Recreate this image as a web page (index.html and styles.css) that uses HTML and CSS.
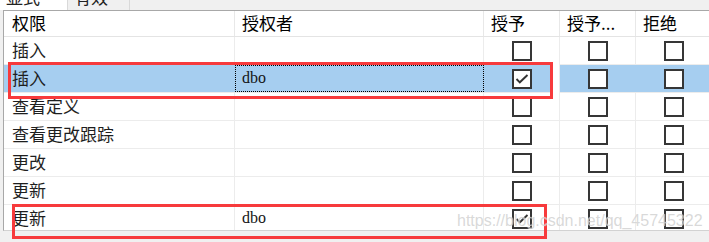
FILE: index.html
```html
<!DOCTYPE html>
<html lang="zh-CN">
<head>
<meta charset="utf-8">
<title>权限</title>
<link rel="stylesheet" href="styles.css">
</head>
<body>
<div class="tabs">
  <div class="tab tab-active"><span class="tab-label">显式</span></div>
  <div class="tab tab-other"><span class="tab-label">有效</span></div>
  <div class="tab-fill"></div>
</div>
<div class="grid">
  <div class="row head">
    <div class="cell c1">权限</div>
    <div class="cell c2">授权者</div>
    <div class="cell c3">授予</div>
    <div class="cell c4">授予...</div>
    <div class="cell c5">拒绝</div>
  </div>
  <div class="row">
    <div class="cell c1">插入</div>
    <div class="cell c2"></div>
    <div class="cell cb"><span class="box"></span></div>
    <div class="cell cb"><span class="box"></span></div>
    <div class="cell cb"><span class="box"></span></div>
  </div>
  <div class="row selected">
    <div class="cell c1">插入</div>
    <div class="cell c2 focus"><span class="latin">dbo</span></div>
    <div class="cell cb"><span class="box"><svg class="tick" viewBox="0 0 20 20"><polyline points="4.5,10 7.8,13.3 15.5,6"/></svg></span></div>
    <div class="cell cb"><span class="box"></span></div>
    <div class="cell cb"><span class="box"></span></div>
  </div>
  <div class="row">
    <div class="cell c1">查看定义</div>
    <div class="cell c2"></div>
    <div class="cell cb"><span class="box"></span></div>
    <div class="cell cb"><span class="box"></span></div>
    <div class="cell cb"><span class="box"></span></div>
  </div>
  <div class="row">
    <div class="cell c1">查看更改跟踪</div>
    <div class="cell c2"></div>
    <div class="cell cb"><span class="box"></span></div>
    <div class="cell cb"><span class="box"></span></div>
    <div class="cell cb"><span class="box"></span></div>
  </div>
  <div class="row">
    <div class="cell c1">更改</div>
    <div class="cell c2"></div>
    <div class="cell cb"><span class="box"></span></div>
    <div class="cell cb"><span class="box"></span></div>
    <div class="cell cb"><span class="box"></span></div>
  </div>
  <div class="row">
    <div class="cell c1">更新</div>
    <div class="cell c2"></div>
    <div class="cell cb"><span class="box"></span></div>
    <div class="cell cb"><span class="box"></span></div>
    <div class="cell cb"><span class="box"></span></div>
  </div>
  <div class="row">
    <div class="cell c1">更新</div>
    <div class="cell c2"><span class="latin">dbo</span></div>
    <div class="cell cb"><span class="box"><svg class="tick" viewBox="0 0 20 20"><polyline points="4.5,10 7.8,13.3 15.5,6"/></svg></span></div>
    <div class="cell cb"><span class="box"></span></div>
    <div class="cell cb"><span class="box"></span></div>
  </div>
</div>
<div class="mark mark-1"></div>
<div class="mark mark-2"></div>
<div class="watermark">https://blog.csdn.net/qq_45745322</div>
</body>
</html>
```
FILE: styles.css
```css
html, body {
  margin: 0;
  padding: 0;
}
body {
  width: 709px;
  height: 242px;
  overflow: hidden;
  position: relative;
  background: #f0f0f0;
  font-family: "Noto Sans CJK SC", "Noto Sans", sans-serif;
  color: #1e1e1e;
}
.tabs {
  display: flex;
  height: 10px;
}
.tab {
  height: 10px;
  overflow: hidden;
  box-sizing: border-box;
  font-size: 17px;
  color: #222;
}
.tab-label {
  display: block;
  line-height: 17px;
  margin-top: -12px;
}
.tab-active {
  width: 67px;
  background: #fff;
  padding-left: 6px;
}
.tab-other {
  width: 63px;
  background: #f0f0f0;
  border-left: 1px solid #d9d9d9;
  border-right: 1px solid #d9d9d9;
  padding-left: 6px;
}
.tab-fill {
  flex: 1;
  background: #f0f0f0;
}
.grid {
  margin-left: 3px;
  height: 221px;
  box-sizing: border-box;
  border-left: 1px solid #a8a8a8;
  border-top: 1px solid #a8a8a8;
  border-bottom: 1px solid #d2d2d2;
  background: #fff;
  overflow: hidden;
}
.row {
  display: grid;
  grid-template-columns: 231px 249px 76px 76px 76px;
  height: 28px;
  box-sizing: border-box;
  border-bottom: 1px solid #ececec;
}
.row.head {
  height: 26px;
  border-bottom-color: #e4e4e4;
}
.cell {
  display: flex;
  align-items: center;
  box-sizing: border-box;
  border-right: 1px solid #ececec;
  padding: 0 0 2px 8px;
  font-size: 17px;
  white-space: nowrap;
  overflow: hidden;
}
.head .cell {
  color: #000;
  border-right-color: #e8e8e8;
  padding-bottom: 3px;
}
.head .c2, .head .c3, .head .c4, .head .c5 {
  padding-left: 7px;
}
.c2 {
  padding-left: 7px;
}
.cb {
  justify-content: center;
  padding: 0;
}
.selected .cell {
  background: #a6cef0;
  border-right-color: #a6cef0;
}
.selected .cb:nth-child(3) {
  border-right-color: #ececec;
}
.focus {
  outline: 1px dotted #000;
  outline-offset: -1px;
}
.latin {
  font-family: "Liberation Serif", serif;
  font-size: 16px;
  color: #141414;
}
.box {
  display: block;
  width: 20px;
  height: 20px;
  box-sizing: border-box;
  border: 2px solid #363636;
  background: #fff;
  position: relative;
}
.tick {
  display: block;
  width: 20px;
  height: 20px;
  margin: -2px 0 0 -2px;
  fill: none;
  stroke: #333;
  stroke-width: 1.9;
}
.mark {
  position: absolute;
  box-sizing: border-box;
  border: 3px solid #f73a3c;
}
.mark-1 {
  left: 8px;
  top: 62px;
  width: 545px;
  height: 37px;
  box-shadow: 6px 0 0 #fff;
}
.mark-2 {
  left: 12px;
  top: 204px;
  width: 535px;
  height: 35px;
}
.watermark {
  position: absolute;
  left: 457px;
  top: 212px;
  font-family: "Liberation Sans", Arial, sans-serif;
  font-size: 16px;
  line-height: 18px;
  color: rgba(185, 185, 185, 0.55);
  text-shadow: 0 0 1px rgba(255, 255, 255, 0.8);
  white-space: nowrap;
}
```
